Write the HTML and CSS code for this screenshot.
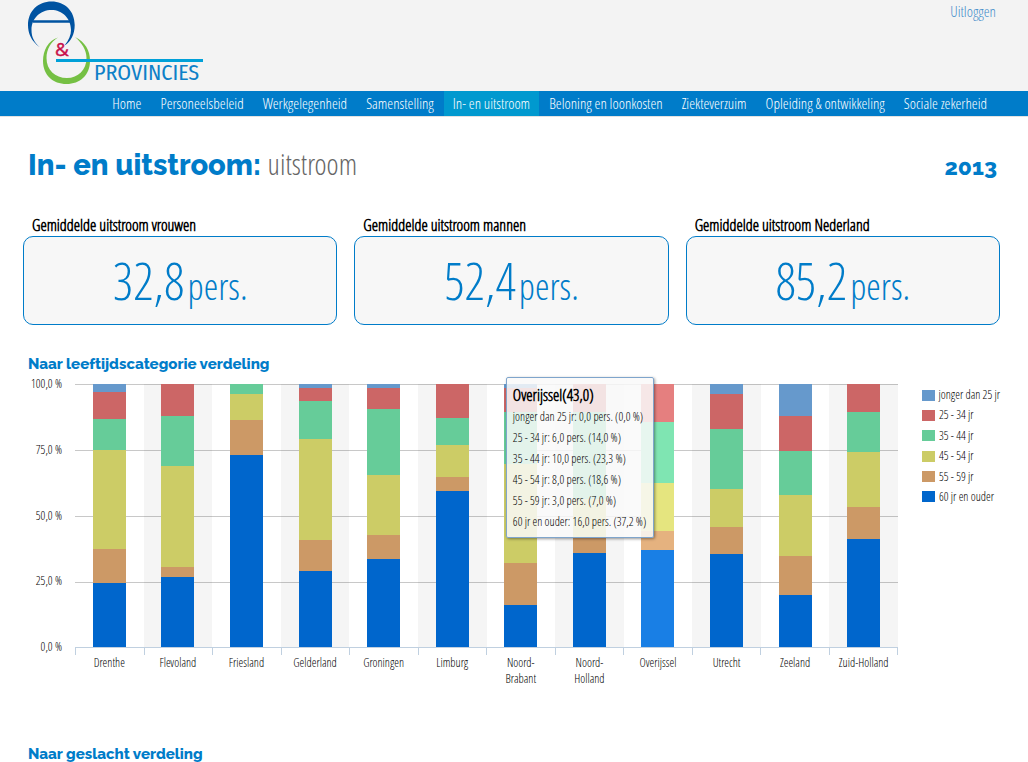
FILE: index.html
```html
<!DOCTYPE html>
<html lang="nl">
<head>
<meta charset="utf-8">
<title>In- en uitstroom: uitstroom</title>
<link rel="stylesheet" href="styles.css">
</head>
<body>
<header class="site-header">
  <a class="logo" href="#" aria-label="A&amp;O Provincies">
    <svg width="180" height="86" viewBox="0 0 180 86" role="img" aria-hidden="true">
      <path fill="#0053a1" d="M15 47.500C6 41 3 33 3 25C3 11 13 1.500 26.500 1.500C40 1.500 49.700 11 49.700 25C49.700 34 46 42 39.500 45.500C44 40 46 35 46 30C46 18 37 10 26.500 10C15.500 10 6.500 18 6.500 30C6.500 37 9 42 15 47.500Z"/>
      <path d="M8 21.500h37" stroke="#0053a1" stroke-width="2.600"/>
      <path fill="#75c043" d="M33 37.500C23 41 18 50 18 61C18 75 28 84 41.500 84C55 84 65 75 65 61C65 50 60 42 50 37C57 43 61.500 50 61.500 58C61.500 70 53 78 42 78C30 78 21.500 70 21.500 58C21.500 49 26 42 33 37.500Z"/>
      <text class="logo-amp" x="30" y="56">&amp;</text>
      <path d="M31 60.500h147" stroke="#00a0d8" stroke-width="3"/>
      <text class="logo-name" x="69" y="80">PROVINCIES</text>
    </svg>
  </a>
  <a class="logout" href="#">Uitloggen</a>
</header>
<nav class="main-nav">
  <a href="#">Home</a>
  <a href="#">Personeelsbeleid</a>
  <a href="#">Werkgelegenheid</a>
  <a href="#">Samenstelling</a>
  <a href="#" class="active" aria-current="page">In- en uitstroom</a>
  <a href="#">Beloning en loonkosten</a>
  <a href="#">Ziekteverzuim</a>
  <a href="#">Opleiding &amp; ontwikkeling</a>
  <a href="#">Sociale zekerheid</a>
</nav>
<main class="content">
  <div class="title-row">
    <h1>In- en uitstroom: <span class="subtitle">uitstroom</span></h1>
    <p class="year">2013</p>
  </div>
  <section class="cards">
    <div class="card"><h2>Gemiddelde uitstroom vrouwen</h2><p class="figure">32,8<span class="unit">pers.</span></p></div>
    <div class="card"><h2>Gemiddelde uitstroom mannen</h2><p class="figure">52,4<span class="unit">pers.</span></p></div>
    <div class="card"><h2>Gemiddelde uitstroom Nederland</h2><p class="figure">85,2<span class="unit">pers.</span></p></div>
  </section>
  <section>
    <h3>Naar leeftijdscategorie verdeling</h3>
    <div class="chart">
      <div class="y-axis"><span>100,0 %</span><span>75,0 %</span><span>50,0 %</span><span>25,0 %</span><span>0,0 %</span></div>
      <div class="plot-area">
        <div class="plot">
          <div class="col"><div class="bar"><i style="flex-grow:8"></i><i style="flex-grow:27"></i><i style="flex-grow:31"></i><i style="flex-grow:99"></i><i style="flex-grow:34"></i><i style="flex-grow:64"></i></div></div>
          <div class="col"><div class="bar"><i style="flex-grow:0"></i><i style="flex-grow:32"></i><i style="flex-grow:50"></i><i style="flex-grow:101"></i><i style="flex-grow:10"></i><i style="flex-grow:70"></i></div></div>
          <div class="col"><div class="bar"><i style="flex-grow:0"></i><i style="flex-grow:0"></i><i style="flex-grow:10"></i><i style="flex-grow:26"></i><i style="flex-grow:35"></i><i style="flex-grow:192"></i></div></div>
          <div class="col"><div class="bar"><i style="flex-grow:4"></i><i style="flex-grow:13"></i><i style="flex-grow:38"></i><i style="flex-grow:101"></i><i style="flex-grow:31"></i><i style="flex-grow:76"></i></div></div>
          <div class="col"><div class="bar"><i style="flex-grow:4"></i><i style="flex-grow:21"></i><i style="flex-grow:66"></i><i style="flex-grow:60"></i><i style="flex-grow:24"></i><i style="flex-grow:88"></i></div></div>
          <div class="col"><div class="bar"><i style="flex-grow:0"></i><i style="flex-grow:34"></i><i style="flex-grow:27"></i><i style="flex-grow:32"></i><i style="flex-grow:14"></i><i style="flex-grow:156"></i></div></div>
          <div class="col"><div class="bar"><i style="flex-grow:4"></i><i style="flex-grow:24"></i><i style="flex-grow:52"></i><i style="flex-grow:99"></i><i style="flex-grow:42"></i><i style="flex-grow:42"></i></div></div>
          <div class="col"><div class="bar"><i style="flex-grow:0"></i><i style="flex-grow:28"></i><i style="flex-grow:87"></i><i style="flex-grow:39"></i><i style="flex-grow:15"></i><i style="flex-grow:94"></i></div></div>
          <div class="col"><div class="bar hover"><i style="flex-grow:0"></i><i style="flex-grow:38"></i><i style="flex-grow:61"></i><i style="flex-grow:48"></i><i style="flex-grow:19"></i><i style="flex-grow:97"></i></div>
            <div class="tooltip" role="tooltip">
              <strong>Overijssel(43,0)</strong>
              <span>jonger dan 25 jr: 0,0 pers. (0,0 %)</span>
              <span>25 - 34 jr: 6,0 pers. (14,0 %)</span>
              <span>35 - 44 jr: 10,0 pers. (23,3 %)</span>
              <span>45 - 54 jr: 8,0 pers. (18,6 %)</span>
              <span>55 - 59 jr: 3,0 pers. (7,0 %)</span>
              <span>60 jr en ouder: 16,0 pers. (37,2 %)</span>
            </div>
          </div>
          <div class="col"><div class="bar"><i style="flex-grow:10"></i><i style="flex-grow:35"></i><i style="flex-grow:60"></i><i style="flex-grow:38"></i><i style="flex-grow:27"></i><i style="flex-grow:93"></i></div></div>
          <div class="col"><div class="bar"><i style="flex-grow:32"></i><i style="flex-grow:35"></i><i style="flex-grow:44"></i><i style="flex-grow:61"></i><i style="flex-grow:39"></i><i style="flex-grow:52"></i></div></div>
          <div class="col"><div class="bar"><i style="flex-grow:0"></i><i style="flex-grow:28"></i><i style="flex-grow:40"></i><i style="flex-grow:55"></i><i style="flex-grow:32"></i><i style="flex-grow:108"></i></div></div>
        </div>
        <div class="ticks"><b></b><b></b><b></b><b></b><b></b><b></b><b></b><b></b><b></b><b></b><b></b><b></b></div>
        <div class="x-axis"><span>Drenthe</span><span>Flevoland</span><span>Friesland</span><span>Gelderland</span><span>Groningen</span><span>Limburg</span><span>Noord-<br>Brabant</span><span>Noord-<br>Holland</span><span>Overijssel</span><span>Utrecht</span><span>Zeeland</span><span>Zuid-Holland</span></div>
      </div>
      <ul class="legend">
        <li>jonger dan 25 jr</li><li>25 - 34 jr</li><li>35 - 44 jr</li><li>45 - 54 jr</li><li>55 - 59 jr</li><li>60 jr en ouder</li>
      </ul>
    </div>
  </section>
  <section>
    <h3>Naar geslacht verdeling</h3>
  </section>
</main>
</body>
</html>
```
FILE: styles.css
```css
* { box-sizing: border-box; }
body {
  margin: 0;
  background: #fff;
  color: #000;
  font-family: "Open Sans Condensed Light", "Open Sans Condensed", sans-serif;
  font-size: 15px;
}
h1, h2, h3, p, ul { margin: 0; padding: 0; }
a { text-decoration: none; }

.site-header {
  display: flex;
  justify-content: space-between;
  align-items: flex-start;
  height: 91px;
  padding: 0 32px 0 25px;
  background: #f3f3f3;
}
.logo svg { display: block; }
.logo-amp { font: 19px "Open Sans", sans-serif; fill: #c8104a; stroke: #c8104a; stroke-width: 0.4; }
.logo-name { font: 22px "Fira Sans Condensed", Lato, sans-serif; fill: #0d80c8; }
.logout { color: #428bca; line-height: 22px; }

.main-nav {
  display: flex;
  justify-content: flex-end;
  gap: 1px;
  padding-right: 32px;
  background: #007cc9;
  border-bottom: 1px solid #e2e2e2;
}
.main-nav a { padding: 0 9px 1px; line-height: 24px; color: #fff; }
.main-nav .active { background: #0099cf; }

.content { padding: 29px 28px 0; }
.title-row {
  display: flex;
  justify-content: space-between;
  align-items: baseline;
  padding-right: 3px;
}
h1, .year, h3 { color: #007cc9; font-family: Raleway, sans-serif; font-weight: 800; }
h1 { font-size: 29px; line-height: 36px; }
.subtitle { color: #666; font: 29px "Open Sans Condensed Light", sans-serif; line-height: 36px; }
.year { font-size: 23px; }

.cards {
  display: grid;
  grid-template-columns: repeat(3, 1fr);
  gap: 17px;
  margin: 32px 0 0 -5px;
}
.card h2 { padding-left: 9px; font-size: 16px; font-weight: 700; line-height: 21px; }
.figure {
  border: 1px solid #007cc9;
  border-radius: 10px;
  background: #f7f7f7;
  color: #007cc9;
  font-size: 51px;
  line-height: 87px;
  text-align: center;
}
.unit { margin-left: 3px; font-size: 37px; line-height: 1; }

h3 { margin-top: 28px; font-size: 15px; font-weight: 800; line-height: 22px; }
.chart {
  display: grid;
  grid-template-columns: 47px 1fr 102px;
  height: 340px;
  padding-top: 9px;
  font-size: 12px;
}
.y-axis {
  display: flex;
  flex-direction: column;
  justify-content: space-between;
  height: 279px;
  margin-top: -8px;
  padding-right: 13px;
  text-align: right;
  line-height: 16px;
  white-space: nowrap;
}
.plot {
  display: grid;
  grid-template-columns: repeat(12, 1fr);
  height: 263px;
  background: repeating-linear-gradient(#c8c8c8 0 1px, transparent 1px 66px);
}
.col { position: relative; display: flex; justify-content: center; }
.col:nth-child(even) { background: rgba(0, 0, 0, 0.04); }
.bar { display: flex; flex-direction: column; width: 33px; }
.bar i:nth-child(1) { background: #6699cc; }
.bar i:nth-child(2) { background: #cc6666; }
.bar i:nth-child(3) { background: #66cc99; }
.bar i:nth-child(4) { background: #cccc66; }
.bar i:nth-child(5) { background: #cc9966; }
.bar i:nth-child(6) { background: #0066cc; }
.bar.hover i:nth-child(2) { background: #e57f7f; }
.bar.hover i:nth-child(3) { background: #7fe5b2; }
.bar.hover i:nth-child(4) { background: #e5e57f; }
.bar.hover i:nth-child(5) { background: #e5b27f; }
.bar.hover i:nth-child(6) { background: #197fe5; }
.ticks {
  display: grid;
  grid-template-columns: repeat(12, 1fr);
  height: 8px;
  border-top: 1px solid #c0d0e0;
  border-right: 1px solid #c0d0e0;
}
.ticks b { border-left: 1px solid #c0d0e0; }
.x-axis {
  display: grid;
  grid-template-columns: repeat(12, 1fr);
  text-align: center;
  line-height: 16px;
}
.tooltip {
  position: absolute;
  top: -7px;
  right: 38px;
  z-index: 1;
  display: flex;
  flex-direction: column;
  padding: 7px 7px 5px 6px;
  border: 1px solid #7fa5cc;
  border-radius: 2px;
  background: rgba(249, 249, 249, 0.85);
  box-shadow: 1px 1px 3px rgba(0, 0, 0, 0.4);
  line-height: 21px;
  white-space: nowrap;
}
.tooltip strong { font-size: 16px; }
.legend {
  display: flex;
  flex-direction: column;
  justify-content: space-between;
  height: 122px;
  margin-top: 1px;
  padding-left: 24px;
  line-height: 20px;
  list-style: none;
  white-space: nowrap;
}
.legend li { display: flex; align-items: center; gap: 4px; }
.legend li::before { content: ""; width: 13px; height: 11px; background: #6699cc; }
.legend li:nth-child(2)::before { background: #cc6666; }
.legend li:nth-child(3)::before { background: #66cc99; }
.legend li:nth-child(4)::before { background: #cccc66; }
.legend li:nth-child(5)::before { background: #cc9966; }
.legend li:nth-child(6)::before { background: #0066cc; }
```
